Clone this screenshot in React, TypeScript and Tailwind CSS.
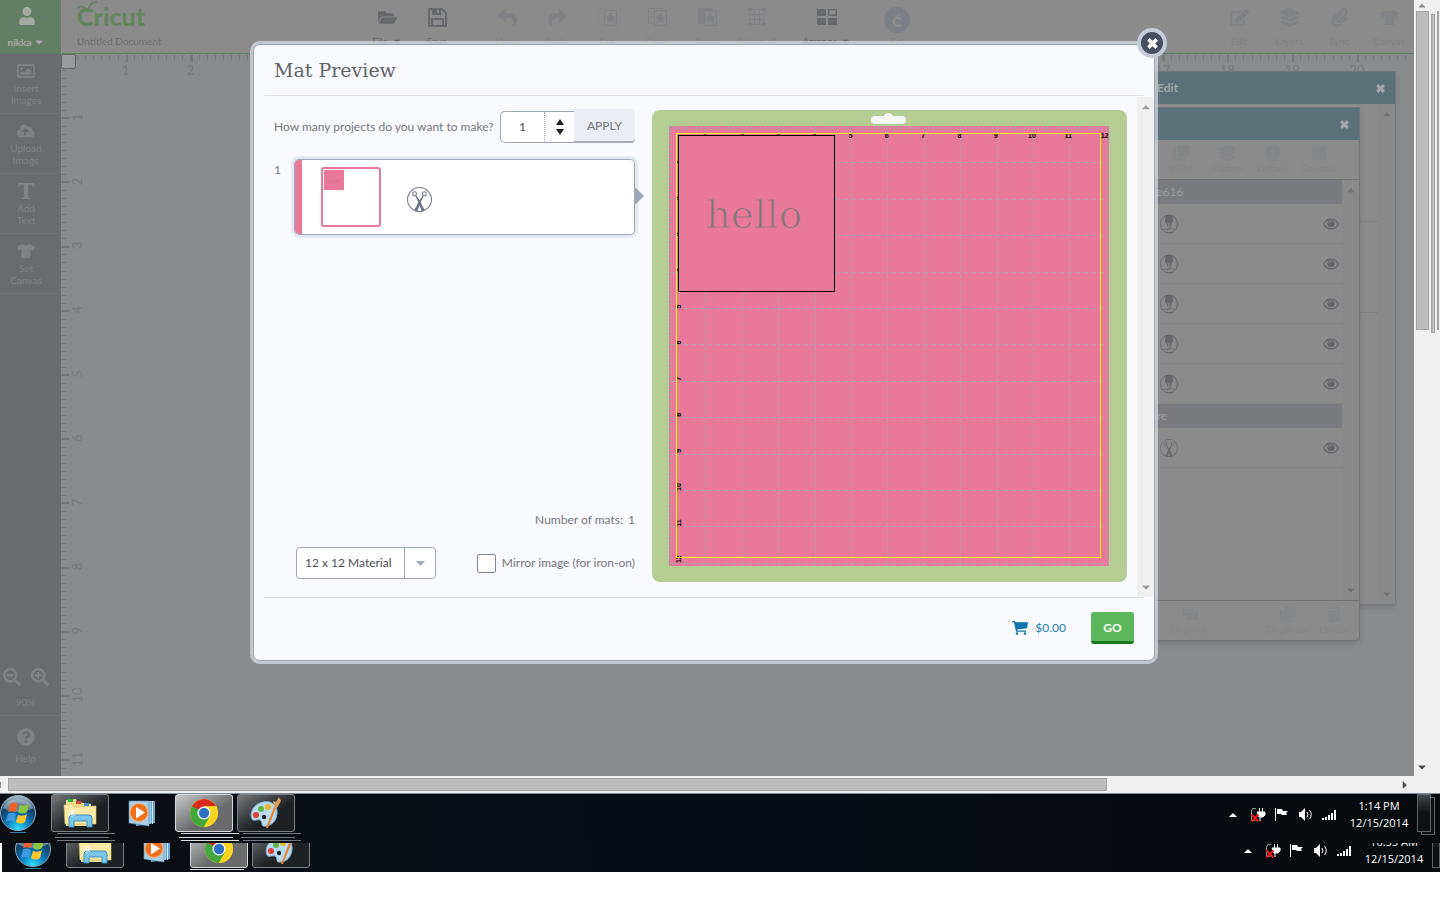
import { useState } from "react";
import type { ReactNode } from "react";
import {
  FaUser,
  FaFolderOpen,
  FaReply,
  FaShare,
  FaRegImage,
  FaCloudUploadAlt,
  FaTshirt,
  FaSearchMinus,
  FaSearchPlus,
  FaQuestionCircle,
  FaLayerGroup,
  FaEdit,
  FaPaperclip,
  FaCaretDown,
  FaCaretUp,
  FaCaretRight,
  FaTrash,
  FaClone,
  FaCircle,
  FaSquare,
  FaObjectUngroup,
} from "react-icons/fa";

const inches = (count: number) => Array.from({ length: count }, (_, i) => i + 1);

const star = "M12.5 5l1.600 3.400 3.600.4-2.700 2.500.8 3.700-3.300-1.900-3.300 1.900.8-3.700-2.700-2.500 3.600-.4z";

const CutIcon = () => (
  <svg width="19" height="18" fill="none" stroke="currentColor">
    <path d="M.5.5h14M.5 2v14" strokeDasharray="1 2" />
    <path d="M6.500 2.500h12v15h-12z" />
    <path d={star} fill="currentColor" stroke="none" />
  </svg>
);

const CopyIcon = () => (
  <svg width="19" height="18" fill="none" stroke="currentColor">
    <path d="M5 15H.5V.5h14V2M2 5l3 2-3 3" />
    <path d="M6.500 2.500h12v15h-12z" />
    <path d={star} fill="currentColor" stroke="none" />
  </svg>
);

const PasteIcon = () => (
  <svg width="19" height="18" fill="none" stroke="currentColor">
    <path d="M0 0h14v2H6v14H0z" fill="currentColor" stroke="none" />
    <path d="M6.500 2.500h12v15h-12z" />
    <path d={star} fill="currentColor" stroke="none" />
  </svg>
);

const SelectAllIcon = () => (
  <svg width="18" height="18" fill="none" stroke="currentColor">
    <path d="M2 1.500h14v15H2zM6.500 2v14M11.500 2v14M2 6.500h14M2 11.500h14" />
    <path d="M0 0h4v3H0zM14 0h4v3h-4zM0 15h4v3H0zM14 15h4v3h-4z" fill="currentColor" stroke="none" />
  </svg>
);

const SaveIcon = () => (
  <svg width="19" height="19" fill="none" stroke="currentColor" strokeWidth="2">
    <path d="M1 1h13l4 4v13H1zM4 18v-7h11v7" />
    <path d="M4 1h9v6H4z" fill="currentColor" stroke="none" />
    <path d="M9 2h2v3H9z" fill="#8b8b8b" stroke="none" />
  </svg>
);

const CrossIcon = ({ className }: { className: string }) => (
  <svg className={className} viewBox="0 0 12 12" stroke="currentColor" strokeWidth="4">
    <path d="M1.500 1.500l9 9M10.500 1.500l-9 9" />
  </svg>
);

const EyeIcon = () => (
  <svg width="16" height="12" viewBox="0 0 16 12" fill="none" stroke="currentColor">
    <path d="M.7 6C4-.6 12-.6 15.300 6 12 12.600 4 12.600.7 6z" strokeWidth="1.300" />
    <circle cx="8" cy="5.500" r="3.800" fill="currentColor" stroke="none" />
    <path d="M6 5.300q0-2 2-2" stroke="#8b8b8b" />
  </svg>
);

const CartIcon = () => (
  <svg width="16" height="14" viewBox="0 0 16 14" fill="#0d74a8">
    <path d="M0 0h3l.6 1.200H16l-1 6-10 1.200.3 1.100H14v1.300H4L2 1.300H0z" />
    <circle cx="5" cy="12.500" r="1.300" />
    <circle cx="13" cy="12.500" r="1.300" />
  </svg>
);

function ToolButton({ icon, label, active, caret }: { icon: ReactNode; label: string; active?: boolean; caret?: boolean }) {
  return (
    <button
      className={
        "flex h-[53px] w-[50px] flex-col items-center pt-[7px] text-[10px] leading-3 whitespace-nowrap " +
        (active ? "text-[#68696d]" : "text-[#818285]")
      }
    >
      <span className="flex h-5 items-center text-[19px]">{icon}</span>
      <span className="mt-2 flex items-center gap-1">
        {label}
        {caret && <FaCaretDown />}
      </span>
    </button>
  );
}

function Logo() {
  return (
    <div className="relative h-8 text-[25px] leading-8 font-black text-[#64845f]">
      <svg className="absolute top-0 left-0" width="24" height="14" fill="none" stroke="currentColor" strokeWidth="1.5">
        <path d="M0.5 8.5C2 5.5 8 5.5 10 12M11 12C11 7 14 2 20 2" />
      </svg>
      <span className="block">Cricut</span>
    </div>
  );
}

function TopBar() {
  return (
    <header className="flex h-[54px] shrink-0 border-b border-[#5f8163] bg-[#8b8b8b]">
      <button className="flex w-[61px] shrink-0 flex-col items-center bg-[#627f64] pt-[7px] pr-2 text-[11px] font-bold text-[#a5aaa5]">
        <FaUser className="h-[18px] w-[18px]" />
        <span className="mt-2 flex items-center gap-0.5 text-[10px] leading-[18px]">
          nikka <FaCaretDown size={12} />
        </span>
      </button>
      <div className="w-[301px] shrink-0 pl-4">
        <Logo />
        <p className="pt-0.5 text-[10px] leading-3.5 text-[#6c6d6e]">Untitled Document</p>
      </div>
      <nav className="flex gap-5">
        <div className="flex">
          <ToolButton icon={<FaFolderOpen />} label="File" active caret />
          <ToolButton icon={<SaveIcon />} label="Save" active />
        </div>
        <div className="flex">
          <ToolButton icon={<FaReply />} label="Undo" />
          <ToolButton icon={<FaShare />} label="Redo" />
          <ToolButton icon={<CutIcon />} label="Cut" />
          <ToolButton icon={<CopyIcon />} label="Copy" />
          <ToolButton icon={<PasteIcon />} label="Paste" />
          <ToolButton icon={<SelectAllIcon />} label="Select all" />
        </div>
        <ToolButton
          icon={
            <svg width="20" height="16" fill="currentColor">
              <path d="M0 0h9v7H0zM0 9h9v7H0zM11 9h9v7h-9z" />
              <path d="M11.75 .75h7.5v5.5h-7.5z" fill="none" stroke="currentColor" strokeWidth="1.5" />
            </svg>
          }
          label="Arrange"
          active
          caret
        />
        <ToolButton
          icon={
            <svg width="26" height="26" viewBox="0 0 26 26" className="mt-1.5 shrink-0">
              <circle cx="13" cy="13" r="13" fill="#7c7f86" />
              <path d="M17 12q-3.500-2.500-6 0t0 5.500q2.500 2.500 6 0" fill="none" stroke="#8b8b8b" strokeWidth="2.500" />
              <path d="M9 9q3-1 4 2 0-4 4-4" fill="none" stroke="#8b8b8b" />
            </svg>
          }
          label="Go"
        />
      </nav>
      <nav className="ml-auto flex">
        <ToolButton icon={<FaEdit />} label="Edit" />
        <ToolButton icon={<FaLayerGroup />} label="Layers" />
        <ToolButton icon={<FaPaperclip />} label="Sync" />
        <ToolButton icon={<FaTshirt />} label="Canvas" />
      </nav>
    </header>
  );
}

const sideItems = [
  { icon: <FaRegImage />, label: "Insert Images" },
  { icon: <FaCloudUploadAlt />, label: "Upload Image" },
  { icon: <b className="font-['DejaVu_Serif'] text-[22px] leading-5">T</b>, label: "Add Text" },
  { icon: <FaTshirt />, label: "Set Canvas" },
];

function SideBar() {
  return (
    <aside className="flex w-[61px] shrink-0 flex-col bg-[#6a6b6e] text-[10px] leading-3 text-[#818286]">
      {sideItems.map((item) => (
        <button key={item.label} className="flex h-[60px] w-[58px] flex-col items-center border-b border-[#737477] pt-[7px] pr-1.5">
          <span className="flex h-5 items-center text-[18px]">{item.icon}</span>
          <span className="mt-px w-min text-center">{item.label}</span>
        </button>
      ))}
      <div className="mt-auto border-b border-[#737477] pr-2.5 pb-[7px] text-center">
        <div className="mb-[10px] flex justify-center gap-2.5">
          <button aria-label="Zoom out"><FaSearchMinus size={18} /></button>
          <button aria-label="Zoom in"><FaSearchPlus size={18} /></button>
        </div>
        90%
      </div>
      <button className="flex h-[60px] flex-col items-center pt-3 pr-2.5">
        <FaQuestionCircle size={18} />
        <span className="mt-1.5">Help</span>
      </button>
    </aside>
  );
}

function Rulers() {
  return (
    <svg className="h-full w-full" fontFamily="Lato, sans-serif" fontSize="13" fill="#77797c" textAnchor="middle">
      {Array.from({ length: 170 }, (_, i) => (
        <rect key={i} x={16 + Math.round(i * 8.1)} y="1" width="1" height="5" />
      ))}
      {inches(20).map((n) => (
        <g key={n}>
          <rect x={Math.round(n * 64.8)} y="1" width="2" height="7" />
          <text x={n * 64.8} y="21">{n}</text>
        </g>
      ))}
      {Array.from({ length: 90 }, (_, i) => (
        <rect key={i} x="0" y={16 + Math.round(i * 8.02)} width="5" height="1" />
      ))}
      {inches(11).map((n) => (
        <g key={n}>
          <rect x="0" y={Math.round(n * 64.2 - 1)} width="8" height="2" />
          <text transform={`translate(21 ${n * 64.2 - 1}) rotate(-90)`}>{n}</text>
        </g>
      ))}
      <rect x=".5" y=".5" width="14" height="14" rx="2" fill="#999a9b" stroke="#5f6062" />
    </svg>
  );
}

const PenIcon = () => (
  <svg width="18" height="20" viewBox="0 0 18 20" fill="none" stroke="currentColor">
    <ellipse cx="9" cy="10" rx="8.500" ry="9" />
    <path d="M6 1.500L5.500 7l3 7V8.500h1V14l3-7-.5-5.500z" fill="currentColor" />
    <path d="M9 9v5" stroke="#8b8b8b" />
    <path d="M3 16.500c3-3 4 0 6-1.500s3 0 6 .5" />
  </svg>
);

const ScissorsIcon = ({ className }: { className: string }) => (
  <svg className={className} viewBox="0 0 24 24" fill="none" stroke="currentColor">
    <circle cx="12" cy="12" r="11.500" />
    <rect x="5.500" y="4.500" width="3.500" height="4" rx="1.500" />
    <rect x="15" y="4.500" width="3.500" height="4" rx="1.500" />
    <path d="M8.500 8.500L12 13.500l4.500 9-2 .6L11.500 15zM15.500 8.500L12 13.500l-4.500 9 2 .6L12.500 15z" fill="currentColor" />
  </svg>
);

function PanelTitle({ children }: { children?: ReactNode }) {
  return (
    <div className="flex h-8 items-center justify-between bg-[#5b717a] pr-2.5 pl-2.5 text-[12px] font-bold text-[#a3a6a8]">
      {children}
      <button aria-label="Close panel" className="ml-auto">
        <CrossIcon className="h-[9px] w-[9px]" />
      </button>
    </div>
  );
}

function PanelScroll() {
  return (
    <div className="flex w-[17px] flex-col items-center justify-between bg-[#898989] py-1 text-[12px] text-[#727376]">
      <FaCaretUp />
      <FaCaretDown />
    </div>
  );
}

const GroupRow = ({ name }: { name: string }) => (
  <div className="h-6 bg-[#7a7b7f] pl-5 text-[12px] leading-6 text-[#9a9b9d]">{name}</div>
);

function LayerRow({ cut }: { cut?: boolean }) {
  return (
    <div className="flex h-10 items-center justify-between border-b border-[#858587] pr-[3px] pl-[49px] text-[#66686c]">
      {cut ? <ScissorsIcon className="h-[18px] w-[18px]" /> : <PenIcon />}
      <EyeIcon />
    </div>
  );
}

function TinyTool({ icon, label }: { icon: ReactNode; label: string }) {
  return (
    <button className="flex w-[46px] flex-col items-center text-[10px] leading-3 text-[#858688]">
      <span className="flex h-[18px] items-center text-[16px]">{icon}</span>
      {label}
    </button>
  );
}

function Panels() {
  return (
    <>
      <section className="absolute top-[17px] right-[18px] flex h-[534px] w-[250px] flex-col rounded-b border border-[#77787b] bg-[#8b8b8b] shadow-md">
        <PanelTitle>Edit</PanelTitle>
        <div className="flex flex-1 justify-end">
          <div className="mr-px w-[18px]">
            <div className="h-[118px] border-b border-dotted border-[#7a7a7c]" />
            <div className="h-[91px] border-b border-dotted border-[#7a7a7c]" />
          </div>
          <PanelScroll />
        </div>
      </section>
      <section className="absolute top-[53px] right-[54px] flex h-[534px] w-[250px] flex-col rounded-b border border-[#717377] bg-[#8b8b8b] shadow-md">
        <PanelTitle />
        <div className="flex h-10 justify-end border-b border-[#727478] pt-1 pr-[17px]">
          <TinyTool icon={<FaClone />} label="Weld" />
          <TinyTool icon={<FaLayerGroup />} label="Flatten" />
          <TinyTool icon={<FaCircle />} label="Detach" />
          <TinyTool icon={<FaSquare />} label="Contour" />
        </div>
        <div className="flex flex-1">
          <div className="flex-1">
            <GroupRow name="Image616" />
            <LayerRow />
            <LayerRow />
            <LayerRow />
            <LayerRow />
            <LayerRow />
            <GroupRow name="Square" />
            <LayerRow cut />
          </div>
          <PanelScroll />
        </div>
        <div className="flex h-10 shrink-0 justify-end border-t border-[#727478] pt-1 pr-0.5">
          <TinyTool icon={<FaObjectUngroup />} label="Ungroup" />
          <span className="w-[52px]" />
          <TinyTool icon={<FaClone />} label="Duplicate" />
          <TinyTool icon={<FaTrash />} label="Delete" />
        </div>
      </section>
    </>
  );
}

function MatGrid() {
  return (
    <svg width="440" height="440" viewBox="0 0 440 440" className="block bg-[#e9799b]">
      <g stroke="#b79aae" strokeDasharray="5 3">
        {inches(12).map((n) => (
          <g key={n}>
            <path d={`M${Math.round(n * 36.4) + 0.5} 12V440`} />
            <path d={`M14 ${Math.round(n * 36.4) + 0.5}H437`} />
          </g>
        ))}
      </g>
      <g fill="#a3a0b8">
        {Array.from({ length: 97 }, (_, i) => (
          <g key={i}>
            <rect x={Math.round(i * 4.55)} width="1" height={i % 8 ? 4 : 7} />
            <rect y={Math.round(i * 4.55)} height="1" width={i % 8 ? 3 : 6} />
          </g>
        ))}
      </g>
      <g fontFamily="Liberation Sans, sans-serif" fontSize="7" fontWeight="bold" textAnchor="middle">
        {inches(12).map((n) => (
          <g key={n}>
            <text x={n * 36.3} y="12">{n}</text>
            <text transform={`translate(12 ${n * 36.1}) rotate(-90)`}>{n}</text>
          </g>
        ))}
      </g>
      <rect x="7.500" y="7.500" width="424" height="424" fill="none" stroke="#ff0" />
      <rect x="9.500" y="9.500" width="156" height="156" fill="#e9799b" stroke="#000" />
      <text
        x="85"
        y="102"
        fontFamily="DejaVu Serif, serif"
        fontSize="39"
        textAnchor="middle"
        fill="#85777b"
        stroke="#e9799b"
        strokeWidth="1"
      >
        hello
      </text>
    </svg>
  );
}

function MatPreview() {
  const [projects, setProjects] = useState("1");
  const [mirror, setMirror] = useState(false);

  return (
    <div role="dialog" aria-labelledby="mat-title" className="relative w-[908px] self-start rounded-[10px] border-[3px] border-[#e0e6f2]/65 bg-[#f9fafd] bg-clip-padding text-[12px] text-[#76777a]">
      <button aria-label="Close" className="absolute -top-4 -right-3 z-10 flex h-[30px] w-[30px] items-center justify-center rounded-full border-4 border-[#c5cbd8] bg-[#454f61] text-white">
        <CrossIcon className="h-[11px] w-[11px]" />
      </button>
      <div className="rounded-[7px] border border-[#9ea7b7]">
        <h1 id="mat-title" className="mx-2.5 h-[51px] border-b border-[#dfe1ed] pl-2.5 font-['DejaVu_Serif'] text-[19px] leading-[50px] text-[#626366]">
          Mat Preview
        </h1>
        <div className="mt-px flex h-[500px]">
          <div className="flex min-w-0 flex-1 flex-col pt-3 pr-[17px] pb-[18px] pl-5">
            <div className="flex h-[34px] items-center">
              <label htmlFor="projects" className="pt-0.5 whitespace-nowrap">How many projects do you want to make?</label>
              <div className="ml-auto flex h-8 w-[74px] self-end rounded-l-[5px] border border-r-0 border-[#9ea7b7] bg-white">
                <input
                  id="projects"
                  value={projects}
                  onChange={(e) => setProjects(e.target.value)}
                  className="w-11 border-r border-dotted border-[#9ea7b7] text-center text-[#4c4d50] outline-none"
                />
                <div className="flex flex-1 flex-col items-center justify-center gap-1">
                  <button aria-label="More" onClick={() => setProjects(String(Number(projects) + 1))}>
                    <svg width="8" height="6"><path d="M4 0l4 6H0z" fill="#1d1d1d" /></svg>
                  </button>
                  <button aria-label="Fewer" onClick={() => setProjects(String(Math.max(1, Number(projects) - 1)))}>
                    <svg width="8" height="6"><path d="M4 6l4-6H0z" fill="#1d1d1d" /></svg>
                  </button>
                </div>
              </div>
              <button className="h-[34px] w-[61px] rounded-r border-b-2 border-[#a3abba] bg-[#ebedf5] pt-0.5">APPLY</button>
            </div>

            <div className="mt-4 flex justify-between">
              <span className="leading-[22px]">1</span>
              <div className="relative flex h-[76px] w-[341px] items-center rounded-[5px] border border-[#9ea7b7] border-l-0 bg-white ring-3 ring-[#e4e9f2]">
                <div className="h-full w-2 rounded-l-[5px] border-l border-[#9ea7b7] bg-[#e9799b]" />
                <div className="ml-[19px] h-[60px] w-[60px] rounded-[3px] border-2 border-[#e9799b] p-px">
                  <div className="flex h-5 w-5 items-center justify-center bg-[#e9799b] text-[6px] text-[#d9708f]">hello</div>
                </div>
                <ScissorsIcon className="mt-1 ml-[26px] h-[25px] w-[25px] text-[#6d7687]" />
                <svg className="absolute top-[26px] -right-[10px]" width="10" height="20">
                  <path d="M0 0l10 10L0 20z" fill="#9ea7b7" />
                </svg>
              </div>
            </div>

            <p className="mt-auto mb-[18px] text-right leading-[18px]">
              Number of mats: <span className="ml-0.5">1</span>
            </p>
            <div className="flex h-8 items-center justify-between pl-[22px]">
              <div className="relative h-8 w-[140px] rounded border border-[#9ea7b7] bg-white">
                <select aria-label="Material size" className="h-full w-full appearance-none pl-2 text-[#4c4d50] outline-none">
                  <option>12 x 12 Material</option>
                </select>
                <span className="pointer-events-none absolute inset-y-0 right-0 flex w-[31px] items-center justify-center border-l border-[#9ea7b7]">
                  <svg width="9" height="5"><path d="M0 0h9L4.500 5z" fill="#9ea7b7" /></svg>
                </span>
              </div>
              <label className="flex items-center gap-1.5">
                <input
                  type="checkbox"
                  checked={mirror}
                  onChange={(e) => setMirror(e.target.checked)}
                  className="h-[19px] w-[19px] appearance-none rounded-[2px] border border-[#7d8799] bg-white checked:bg-[#9ea7b7]"
                />
                Mirror image (for iron-on)
              </label>
            </div>
          </div>
          <div className="mt-[13px] mr-2.5 h-[472px] w-[475px] shrink-0 rounded-[8px] bg-[#b3cd93] pl-[17px]">
            <svg className="ml-[202px] block" width="35" height="16">
              <path d="M4 6h9c1-4 8-4 9 0h9a4 4 0 010 8H4a4 4 0 010-8z" fill="#f5f6f8" />
            </svg>
            <MatGrid />
          </div>
          <div className="flex w-[17px] shrink-0 flex-col items-center justify-between bg-[#f0f0f0] py-1 text-[12px] text-[#9c9c9c]">
            <FaCaretUp />
            <FaCaretDown />
          </div>
        </div>
        <div className="mx-2.5 border-t border-[#dde1e9]" />
        <div className="flex h-[62px] justify-end pt-3.5 pr-5">
          <a href="#cart" className="mr-[25px] flex h-8 items-center gap-[7px] text-[#1c7fae]">
            <CartIcon />
            $0.00
          </a>
          <button className="h-8 w-[43px] rounded-[3px] border-b-3 border-[#1b7a1b] bg-[#5cb75c] pt-0.5 font-bold text-white">GO</button>
        </div>
      </div>
    </div>
  );
}

function Orb() {
  return (
    <svg width="36" height="38" viewBox="0 0 36 38" className="shrink-0">
      <defs>
        <radialGradient id="orb" cx=".5" cy=".95" r=".9">
          <stop offset="0" stopColor="#2de0ff" />
          <stop offset=".4" stopColor="#0a76b8" />
          <stop offset=".75" stopColor="#123c62" />
          <stop offset="1" stopColor="#9db4c6" />
        </radialGradient>
      </defs>
      <circle cx="18" cy="19" r="17.500" fill="url(#orb)" stroke="#8ba9bf" />
      <path d="M3 14a15.500 12 0 0130 0c-8 5-22 5-30 0z" fill="#fff" opacity=".35" />
      <path d="M10 10c3-2 6-1 8 0l-2 8c-3-1-5-1-8 0z" fill="#e8622a" />
      <path d="M20 11c3 1 6 1 9-1l-2 8c-3 2-6 2-9 0z" fill="#8cc63e" />
      <path d="M8 20c3-2 5-1 8 0l-2 8c-3-2-5-1-8 0z" fill="#3f9be0" />
      <path d="M18 21c3 1 6 1 9-1l-2 8c-3 2-6 2-9 0z" fill="#fcc52c" />
    </svg>
  );
}

const FolderArt = () => (
  <svg width="34" height="32" viewBox="0 0 34 32">
    <path d="M3 3l10-1 1 3 14 2v22H3z" fill="#f0dd8c" />
    <path d="M5 2h5v3H5z" fill="#2fae3c" />
    <path d="M13 4h5v3h-5z" fill="#d64a32" />
    <path d="M21 6h5v3h-5z" fill="#3d93d8" />
    <path d="M1 8l8-1 2 3 22-1v18H2z" fill="#f9eaa6" stroke="#d9c069" strokeWidth=".6" />
    <path d="M6 30V21q0-3 3-3h17q3 0 3 3v9h-5v-6H11v6z" fill="#79c6ea" stroke="#3d8fc0" />
    <path d="M9 12v8M5 16h8M6 13l6 6M12 13l-6 6" stroke="#fff" strokeWidth=".8" />
  </svg>
);

const MediaArt = () => (
  <svg width="28" height="27" viewBox="0 0 28 27">
    <path d="M8 1h19v22l-19 3z" fill="#6aa6cc" />
    <path d="M22 1v23M24.500 1v23" stroke="#cfe6f4" />
    <path d="M1 1h20v25L1 23z" fill="#a8cde4" stroke="#5d93b8" strokeWidth=".6" />
    <circle cx="11" cy="12.500" r="9" fill="#f0701d" stroke="#f9b37c" />
    <path d="M8 7l9 5.500-9 6z" fill="#fff" />
  </svg>
);

const ChromeArt = () => (
  <svg width="30" height="30" viewBox="0 0 30 30">
    <circle cx="15" cy="15" r="14" fill="#f8d01e" />
    <path d="M15 15L8.900 18.500 2.900 8A14 14 0 0127.100 8H15z" fill="#db2b20" />
    <path d="M15 15L2.900 8a14 14 0 0012 21l6-10.500z" fill="#43a83c" />
    <path d="M27 8H15l6 10.500L15 29A14 14 0 0027 8z" fill="#f9d423" />
    <circle cx="15" cy="15" r="6.500" fill="#fff" />
    <circle cx="15" cy="15" r="5.200" fill="#2f72c4" />
  </svg>
);

const PaintArt = () => (
  <svg width="34" height="32" viewBox="0 0 34 32">
    <path d="M14 5c9-2 15 4 14 12-1 9-8 13-14 12-2-1 0-4-3-6-3-1-6 2-8-1C0 15 5 7 14 5z" fill="#b9d9ee" stroke="#7fb0d0" />
    <circle cx="7" cy="18" r="3" fill="#dd3f36" />
    <circle cx="12" cy="12" r="3" fill="#5cb540" />
    <circle cx="19" cy="10" r="3" fill="#f0b427" />
    <circle cx="15" cy="20" r="2.200" fill="#152129" />
    <path d="M17 31l8-21 2 1-8 20z" fill="#e5812c" />
    <path d="M25 10l-1-6 3 1 3-5 2 4-4 7z" fill="#d9a25c" />
  </svg>
);

const apps = [
  { name: "Explorer", art: <FolderArt />, box: "border-[#7d8287] bg-linear-to-br from-[#77797b] to-[#1d2124] to-60%", line: "bg-[#74787c]" },
  { name: "Media Player", art: <MediaArt />, box: "border-transparent", line: "" },
  { name: "Chrome", art: <ChromeArt />, box: "border-[#d8d9da] bg-linear-to-br from-[#c9cacb] to-[#686a6c] to-60%", line: "bg-[#dcdddf]" },
  { name: "Paint", art: <PaintArt />, box: "border-[#7d8287] bg-linear-to-br from-[#77797b] to-[#1d2124] to-60%", line: "bg-[#74787c]" },
];

function TaskBar({ time, lower }: { time: string; lower?: boolean }) {
  return (
    <div
      className={
        "flex shrink-0 flex-col justify-end overflow-hidden bg-linear-to-r from-[#0b0f14] via-[#080c15] to-[#070b0d] text-white " +
        (lower ? "ml-0.5 h-[29px]" : "h-[50px] border-t border-[#7f8d99]")
      }
    >
      <div className={"flex shrink-0 " + (lower ? "h-[43px] pl-[13px] pt-px" : "h-[49px]")}>
        <button aria-label="Start" className="flex flex-col items-center self-start">
          <Orb />
          <span className="h-px w-4 bg-[#2e82a8]" />
        </button>
        <div className="ml-[15px] flex gap-1">
          {apps.map((app) => (
            <div key={app.name} className="w-[58px]">
              <button aria-label={app.name} className={"flex h-[38px] w-[58px] items-center justify-center rounded-[3px] border " + app.box}>
                {app.art}
              </button>
              {app.line && !lower && (
                <svg className="block overflow-visible" width="58" height="11" stroke={app.name === "Chrome" ? "#dcdddf" : "#74787c"}>
                  <path d="M6 1.500h58M4 5.500h54M6 8.500h58" />
                </svg>
              )}
              {app.name === "Chrome" && lower && <div className="mt-px h-px w-[54px] bg-[#dcdddf]" />}
            </div>
          ))}
        </div>
        <div className="ml-auto flex h-[42px] items-center">
          <Tray />
        </div>
        <div className={"w-[76px] font-['Open_Sans'] pt-[3px] text-center text-[11px] leading-[17px]"}>
          <p>{time}</p>
          <p>12/15/2014</p>
        </div>
        <button
          aria-label="Show desktop"
          className={
            "h-[38px] border border-[#5d6468] bg-linear-to-b from-[#44494c] to-[#0d1113] to-50% " + (lower ? "w-2" : "mr-[9px] w-3.5 shadow-[4px_3px_0_-1px_#0d1113,4px_3px_0_0_#5d6468]")
          }
        />
      </div>
    </div>
  );
}

function Tray() {
  return (
    <div className="flex">
      <svg width="24" height="16"><path d="M8 10l4-4 4 4z" fill="#fff" /></svg>
      <svg width="24" height="16" fill="none" stroke="#fff">
        <path d="M11 1.500H7.500V3H6.500v10.500h4" stroke="#8d9194" />
        <path d="M14.500 1v4M17.500 1v4M12 5h8v3l-2 2h-4zM15 10v4" fill="#fff" />
        <path d="M6.500 7.500l7 7M13.500 7.500l-7 7" stroke="#f01818" strokeWidth="2" />
      </svg>
      <svg width="24" height="16" fill="#fff">
        <path d="M6 1h1v13H6zM8 2h5l1 2h5l-2 2 1 2h-5l-1-1H8z" />
      </svg>
      <svg width="24" height="16" fill="#fff">
        <path d="M6 5h2l4-4v13l-4-4H6z" />
        <path d="M14 5q2 3 0 5M16.500 3q3.500 5 0 9" fill="none" stroke="#fff" />
      </svg>
      <svg width="24" height="16" fill="#fff">
        <path d="M5 11h2v2H5zM8 10h2v3H8zM11 8h2v5h-2zM14 6h2v7h-2zM17 3h2v10h-2z" />
      </svg>
    </div>
  );
}

export default function App() {
  return (
    <div className="flex h-screen min-h-[800px] flex-col bg-white pb-7 font-['Lato',sans-serif]">
      <div className="flex min-h-0 flex-1">
        <main className="relative flex min-w-0 flex-1 flex-col overflow-hidden">
          <TopBar />
          <div className="flex min-h-0 flex-1">
            <SideBar />
            <div className="relative min-w-0 flex-1 bg-[#8a8b8c]">
              <div className="absolute inset-0">
                <Rulers />
              </div>
              <Panels />
            </div>
          </div>
          <div className="absolute inset-0 flex justify-center pt-[41px] pr-1.5">
            <MatPreview />
          </div>
        </main>
        <div className="flex w-[26px] shrink-0 flex-col bg-[#f0f0f0]">
          <FaCaretUp size={12} className="ml-0.5 h-[11px] shrink-0 text-[#8d8d8d]" />
          <div className="flex flex-1 gap-0.5 pl-0.5">
            <div className="h-[319px] w-[13px] border border-[#a3a3a3] bg-[#bcbcbc]" />
            <div className="mt-[3px] h-[319px] w-1 border border-[#a3a3a3] bg-[#bcbcbc]" />
            <div className="h-[319px] w-0.5 bg-[#a3a3a3]" />
          </div>
          <FaCaretDown size={12} className="mb-[3px] ml-0.5 text-[#4d4d4d]" />
        </div>
      </div>
      <div className="flex h-[17px] shrink-0 items-center bg-[#f0f0f0]">
        <div className="h-1.5 w-px bg-[#8d8d8d]" />
        <div className="ml-[7px] h-[13px] flex-1 border border-[#a3a3a3] bg-[#bcbcbc]" />
        <div className="flex w-[333px] justify-end pr-[29px]">
          <FaCaretRight size={12} className="text-[#4d4d4d]" />
        </div>
      </div>
      <TaskBar time="1:14 PM" />
      <TaskBar time="10:55 AM" lower />
    </div>
  );
}
